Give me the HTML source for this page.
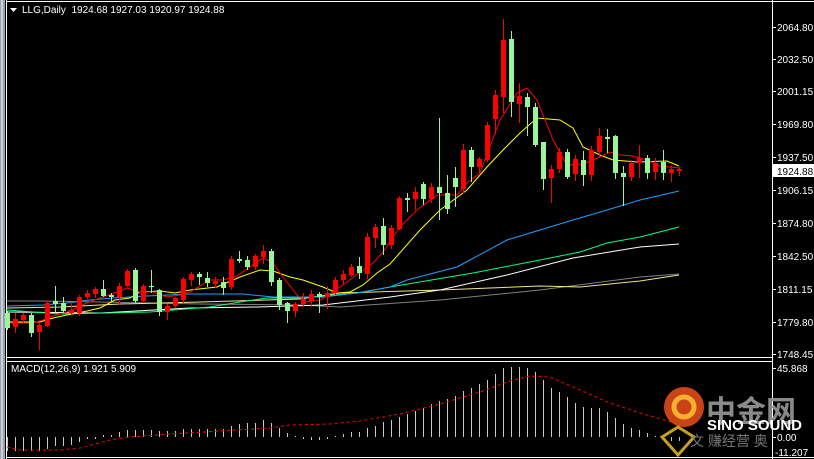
<!DOCTYPE html>
<html><head><meta charset="utf-8"><style>
html,body{margin:0;padding:0;background:#000;width:814px;height:459px;overflow:hidden}
svg{display:block}
text{font-family:"Liberation Sans","Noto Sans CJK SC",sans-serif;font-size:10px;fill:#fff}
</style></head><body>
<svg width="814" height="459" viewBox="0 0 814 459" xmlns="http://www.w3.org/2000/svg">
<rect x="0" y="0" width="814" height="459" fill="#000"/>
<rect x="0" y="0" width="5" height="459" fill="#9aa3ad"/>
<rect x="1" y="0" width="2" height="459" fill="#c8ced6"/>
<g stroke="#fff" stroke-width="1" fill="none">
<path d="M6.5 0V459M6 1.5H814M6 357.5H773M6 361.5H773M6 457.5H814M772.5 0V459"/>
</g>
<!-- MAs -->
<g fill="none" stroke-width="1">
<polyline stroke="#808080" points="7,301 40,301 100,302 200,304 300,305 340,307 440,300 540,290 640,277 679,274"/>
<polyline stroke="#f0e68c" points="7,308 60,307 120,304 200,302 300,299 340,293 440,290 540,286 580,287 640,281 679,275"/>
<polyline stroke="#fff" points="7,312 100,313 190,308 257,307 323,305 390,297 440,290 507,275 573,258 640,247 679,244"/>
<polyline stroke="#00ff7f" points="7,310 60,314 150,312 210,307 240,302 267,298 300,298 357,293 390,287 473,273 540,260 580,252 607,243 640,237 679,227"/>
<polyline stroke="#1e9fff" points="7,306 43,305 67,303 90,300 113,298 147,296 190,294 243,294 273,297 323,297 357,293 390,287 407,280 457,267 507,240 540,230 573,220 607,210 640,200 679,191"/>
<polyline stroke="#ffff00" points="7,322 40,322 53,318 67,315 87,311 100,308 115,300 130,298 140,292 160,291 175,293 190,290 217,287 240,277 260,270 273,271 290,277 303,280 323,287 337,293 350,292 363,285 377,273 390,264 420,230 440,210 467,190 487,167 503,150 520,133 537,118 560,120 573,128 583,147 600,155 613,160 637,162 667,161 679,166"/>
<polyline stroke="#ff0000" points="7,323 33,323 43,320 53,316 67,312 87,303 100,298 117,292 127,288 140,292 153,292 167,297 180,295 190,292 210,280 223,280 237,276 257,262 263,258 272,262 283,277 297,295 307,302 320,300 333,292 347,282 363,270 373,263 383,252 400,227 417,210 437,195 457,195 467,183 480,173 500,120 517,93 527,88 537,100 553,140 567,165 583,164 600,157 610,152 620,155 633,156 647,160 660,166 670,167 679,168"/>
</g>
<!-- candle wicks -->
<path stroke="#ff0000" stroke-width="1" fill="none" d="M15.5 313V333M23.5 313V323M39.5 322V350M47.5 301V327M71.5 302V315M79.5 295V316M87.5 290V299M95.5 287V298M119.5 283V305M127.5 269V287M143.5 284V303M167.5 304V320M175.5 297V308M183.5 277V303M191.5 272V286M215.5 277V288M231.5 256V290M255.5 254V270M263.5 245V264M295.5 302V317M303.5 293V307M311.5 290V307M327.5 286V309M335.5 277V295M343.5 270V285M351.5 264V277M367.5 233V279M375.5 224V248M391.5 225V249M399.5 196V230M415.5 187V210M431.5 183V203M463.5 144V193M479.5 157V173M487.5 122V162M495.5 90V134M503.5 19V113M519.5 83V123M551.5 165V203M559.5 148V173M575.5 155V181M591.5 146V181M599.5 128V157M631.5 160V181M639.5 145V178M655.5 158V180M671.5 166V182M679.5 167V176"/>
<path stroke="#98f598" stroke-width="1" fill="none" d="M7.5 311V330M31.5 313V337M55.5 286V313M63.5 297V313M103.5 280V297M111.5 293V302M135.5 268V303M151.5 270V293M159.5 289V316M199.5 272V285M207.5 272V287M223.5 277V295M239.5 251V263M247.5 256V270M271.5 249V286M279.5 278V310M287.5 302V323M319.5 292V313M359.5 257V279M383.5 218V255M407.5 193V212M423.5 182V205M439.5 118V220M447.5 175V214M455.5 167V207M471.5 147V182M511.5 31V117M527.5 93V136M535.5 103V147M543.5 142V190M567.5 149V179M583.5 151V186M607.5 129V153M615.5 135V179M623.5 166V206M647.5 155V179M663.5 150V180"/>
<g fill="#ff0000">
<rect x="13" y="319" width="5" height="8"/><rect x="21" y="315" width="5" height="5"/><rect x="37" y="325" width="5" height="7"/><rect x="45" y="303" width="5" height="23"/><rect x="69" y="310" width="5" height="3"/><rect x="77" y="297" width="5" height="16"/><rect x="85" y="293" width="5" height="4"/><rect x="93" y="289" width="5" height="5"/><rect x="117" y="286" width="5" height="11"/><rect x="125" y="271" width="5" height="15"/><rect x="141" y="286" width="5" height="15"/><rect x="165" y="306" width="5" height="6"/><rect x="173" y="298" width="5" height="8"/><rect x="181" y="279" width="5" height="21"/><rect x="189" y="274" width="5" height="6"/><rect x="213" y="281" width="5" height="3"/><rect x="229" y="259" width="5" height="28"/><rect x="253" y="256" width="5" height="11"/><rect x="261" y="251" width="5" height="6"/><rect x="293" y="304" width="5" height="7"/><rect x="301" y="299" width="5" height="5"/><rect x="309" y="294" width="5" height="7"/><rect x="325" y="293" width="5" height="4"/><rect x="333" y="280" width="5" height="13"/><rect x="341" y="274" width="5" height="6"/><rect x="349" y="267" width="5" height="8"/><rect x="365" y="237" width="5" height="37"/><rect x="373" y="227" width="5" height="11"/><rect x="389" y="228" width="5" height="17"/><rect x="397" y="198" width="5" height="31"/><rect x="413" y="192" width="5" height="7"/><rect x="429" y="187" width="5" height="12"/><rect x="461" y="150" width="5" height="39"/><rect x="477" y="159" width="5" height="8"/><rect x="485" y="125" width="5" height="35"/><rect x="493" y="95" width="5" height="24"/><rect x="501" y="40" width="5" height="57"/><rect x="517" y="96" width="5" height="8"/><rect x="549" y="169" width="5" height="9"/><rect x="557" y="152" width="5" height="17"/><rect x="573" y="159" width="5" height="15"/><rect x="589" y="150" width="5" height="25"/><rect x="597" y="136" width="5" height="16"/><rect x="629" y="163" width="5" height="14"/><rect x="637" y="158" width="5" height="5"/><rect x="653" y="163" width="5" height="9"/><rect x="669" y="169" width="5" height="4"/><rect x="677" y="169" width="5" height="2"/>
</g>
<g fill="#98f598">
<rect x="5" y="313" width="5" height="15"/><rect x="29" y="315" width="5" height="18"/><rect x="53" y="301" width="5" height="3"/><rect x="61" y="303" width="5" height="8"/><rect x="101" y="289" width="5" height="7"/><rect x="109" y="295" width="5" height="2"/><rect x="133" y="270" width="5" height="31"/><rect x="149" y="286" width="5" height="1"/><rect x="157" y="290" width="5" height="22"/><rect x="197" y="274" width="5" height="3"/><rect x="205" y="278" width="5" height="5"/><rect x="221" y="282" width="5" height="6"/><rect x="237" y="259" width="5" height="2"/><rect x="245" y="260" width="5" height="7"/><rect x="269" y="251" width="5" height="31"/><rect x="277" y="280" width="5" height="25"/><rect x="285" y="303" width="5" height="8"/><rect x="317" y="294" width="5" height="3"/><rect x="357" y="266" width="5" height="7"/><rect x="381" y="226" width="5" height="19"/><rect x="405" y="198" width="5" height="2"/><rect x="421" y="184" width="5" height="15"/><rect x="437" y="187" width="5" height="6"/><rect x="445" y="193" width="5" height="16"/><rect x="453" y="178" width="5" height="9"/><rect x="469" y="150" width="5" height="17"/><rect x="509" y="39" width="5" height="63"/><rect x="525" y="97" width="5" height="10"/><rect x="533" y="107" width="5" height="38"/><rect x="541" y="142" width="5" height="37"/><rect x="565" y="152" width="5" height="25"/><rect x="581" y="160" width="5" height="15"/><rect x="605" y="137" width="5" height="2"/><rect x="613" y="136" width="5" height="37"/><rect x="621" y="173" width="5" height="4"/><rect x="645" y="158" width="5" height="15"/><rect x="661" y="162" width="5" height="11"/>
</g>
<!-- price axis -->
<g stroke="#fff"><path d="M772 27.5h4M772 59.5h4M772 91.5h4M772 124.5h4M772 157.5h4M772 190.5h4M772 223.5h4M772 256.5h4M772 289.5h4M772 322.5h4M772 354.5h4M772 368.5h4M772 437.5h4"/></g>
<g>
<text x="777" y="31">2064.80</text><text x="777" y="63">2032.50</text><text x="777" y="95">2001.15</text><text x="777" y="128">1969.80</text><text x="777" y="161">1937.50</text><text x="777" y="194">1906.15</text><text x="777" y="227">1874.80</text><text x="777" y="260">1842.50</text><text x="777" y="293">1811.15</text><text x="777" y="326">1779.80</text><text x="777" y="358">1748.45</text>
<text x="777" y="372">45.868</text><text x="777" y="441">0.00</text><text x="775" y="456">-11.207</text>
</g>
<rect x="773" y="164" width="41" height="13" fill="#fff"/>
<text x="777" y="175" style="fill:#000">1924.88</text>
<!-- header -->
<path d="M10 8h7l-3.5 4z" fill="#fff"/>
<text x="22" y="13">LLG,Daily&#160; 1924.68 1927.03 1920.97 1924.88</text>
<text x="11" y="372">MACD(12,26,9) 1.921 5.909</text>
<!-- MACD histogram -->
<path stroke="#c8c8c8" stroke-width="1" fill="none" d="M7.5 437V451M15.5 437V451M23.5 437V451M31.5 437V451M39.5 437V451M47.5 437V449M55.5 437V446M63.5 437V446M71.5 437V445M79.5 437V442M87.5 437V439M95.5 437V439M103.5 435V437M111.5 435V437M119.5 432V437M127.5 430V437M135.5 430V437M143.5 430V437M151.5 430V437M159.5 431V437M167.5 431V437M175.5 431V437M183.5 429V437M191.5 429V437M199.5 429V437M207.5 429V437M215.5 429V437M223.5 429V437M231.5 426V437M239.5 424V437M247.5 423V437M255.5 423V437M263.5 420V437M271.5 423V437M279.5 428V437M287.5 433V437M295.5 436V437M303.5 437V439M311.5 437V440M319.5 437V440M327.5 437V439M335.5 436V437M343.5 434V437M351.5 432V437M359.5 432V437M367.5 428V437M375.5 426V437M383.5 422V437M391.5 420V437M399.5 417V437M407.5 414V437M415.5 411V437M423.5 408V437M431.5 404V437M439.5 401V437M447.5 399V437M455.5 396V437M463.5 391V437M471.5 388V437M479.5 384V437M487.5 380V437M495.5 374V437M503.5 368V437M511.5 367V437M519.5 367V437M527.5 368V437M535.5 372V437M543.5 380V437M551.5 388V437M559.5 392V437M567.5 397V437M575.5 403V437M583.5 407V437M591.5 408V437M599.5 408V437M607.5 412V437M615.5 418V437M623.5 424V437M631.5 428V437M639.5 430V437M647.5 433V437M655.5 436V437M663.5 437V440M671.5 437V441M679.5 437V441"/>
<polyline fill="none" stroke="#ff0000" stroke-width="1" stroke-dasharray="3,3" points="7,447 20,450 60,450 80,448 95,444 110,440 130,437 170,434 220,431 270,428 290,425 330,424 360,421 400,414 440,404 480,392 510,381 530,376 550,377 580,390 610,403 640,413 665,420 680,425"/>
<!-- watermark -->
<circle cx="684" cy="407" r="20" fill="#e04a1a" opacity="0.9"/>
<circle cx="684" cy="407" r="10" fill="none" stroke="#f5b030" stroke-width="5"/>
<path d="M662 437l16 -10 16 10 -16 18z" fill="none" stroke="#c8a020" stroke-width="3"/>
<text x="706" y="422" style="font-size:30px;fill:#8a8a8a;font-weight:bold">中金网</text>
<text x="707" y="430" style="font-size:15px;font-weight:bold;fill:#fff">SINO SOUND</text>
<text x="690" y="446" style="font-size:14px;fill:#777">文 赚经营 奥</text>
</svg>
</body></html>
